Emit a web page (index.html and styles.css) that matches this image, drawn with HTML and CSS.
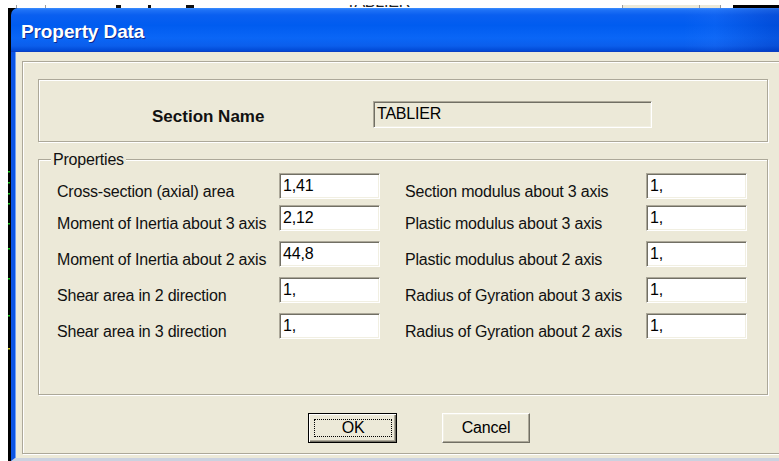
FILE: index.html
```html
<!DOCTYPE html>
<html lang="en">
<head>
<meta charset="utf-8">
<title>Property Data</title>
<link rel="stylesheet" href="styles.css">
</head>
<body>
<div class="desk">
  <!-- strip of the main program window showing above the dialog -->
  <div class="behind">
    <div class="behind-band">
      <span class="bh-rule bh-rule-1"></span>
      <span class="bh-rule bh-rule-2"></span>
      <span class="bh-ink bh-ink-1"></span>
      <span class="bh-ink bh-ink-2"></span>
      <span class="bh-ink bh-ink-3"></span>
      <span class="bh-text">TABLIER</span>
      <span class="bh-panel"></span>
      <span class="bh-panel bh-panel-small"></span>
      <span class="bh-rule bh-rule-end"></span>
      <span class="bh-dark"></span>
    </div>
  </div>

  <div class="stage">
    <div class="gutter">
      <svg class="plot-edge" width="3" height="453" viewBox="0 0 3 453" aria-hidden="true">
        <rect x="0" y="0" width="3" height="453" fill="#000"/>
        <g fill="#17c21a">
          <rect x="0" y="163" width="2" height="1.5"/>
          <rect x="0" y="174" width="2" height="1.5"/>
          <rect x="0" y="185" width="2" height="1.5"/>
          <rect x="0" y="195" width="2" height="1.5"/>
          <rect x="0" y="215" width="2" height="1.5"/>
          <rect x="0" y="240" width="2" height="1.5"/>
          <rect x="0" y="270" width="2" height="1.5"/>
          <rect x="0" y="307" width="2" height="1.5"/>
        </g>
        <rect x="0" y="340" width="2" height="1.5" fill="#c8c21a"/>
      </svg>
    </div>

    <div class="window">
      <div class="titlebar">
        <span class="title">Property Data</span>
      </div>
      <div class="client">
        <div class="frame etched">
          <div class="section-box etched">
            <span class="section-label">Section Name</span>
            <div class="field field-name">TABLIER</div>
          </div>

          <div class="props etched">
            <span class="props-title">Properties</span>

            <div class="prop-row">
              <span class="lbl lbl-left">Cross-section (axial) area</span>
              <div class="field field-num">1,41</div>
              <span class="lbl lbl-right">Section modulus about 3 axis</span>
              <div class="field field-num">1,</div>
            </div>
            <div class="prop-row">
              <span class="lbl lbl-left">Moment of Inertia about 3 axis</span>
              <div class="field field-num">2,12</div>
              <span class="lbl lbl-right">Plastic modulus about 3 axis</span>
              <div class="field field-num">1,</div>
            </div>
            <div class="prop-row">
              <span class="lbl lbl-left">Moment of Inertia about 2 axis</span>
              <div class="field field-num">44,8</div>
              <span class="lbl lbl-right">Plastic modulus about 2 axis</span>
              <div class="field field-num">1,</div>
            </div>
            <div class="prop-row">
              <span class="lbl lbl-left">Shear area in 2 direction</span>
              <div class="field field-num">1,</div>
              <span class="lbl lbl-right">Radius of Gyration about 3 axis</span>
              <div class="field field-num">1,</div>
            </div>
            <div class="prop-row">
              <span class="lbl lbl-left">Shear area in 3 direction</span>
              <div class="field field-num">1,</div>
              <span class="lbl lbl-right">Radius of Gyration about 2 axis</span>
              <div class="field field-num">1,</div>
            </div>
          </div>

          <div class="buttons">
            <button class="btn btn-default" type="button"><span class="btn-focus">OK</span></button>
            <button class="btn btn-cancel" type="button">Cancel</button>
          </div>
        </div>
      </div>
    </div>
  </div>
</div>
</body>
</html>
```

FILE: styles.css
```css
html,
body {
  margin: 0;
  padding: 0;
}

body {
  width: 779px;
  height: 461px;
  overflow: hidden;
  background: #fff;
  font-family: "Liberation Sans", Arial, sans-serif;
  color: #000;
}

.desk {
  display: flex;
  flex-direction: column;
  height: 461px;
}

/* ---- main program strip above the dialog ---- */
.behind {
  flex: none;
  height: 8px;
  background: #fff;
  overflow: hidden;
}

.behind-band {
  display: flex;
  height: 3px;
  margin-top: 5px;
  overflow: hidden;
  background: #fff;
}

.bh-rule {
  flex: none;
  width: 1px;
  height: 3px;
  background: #9c9c9c;
}

.bh-rule-1 { margin-left: 16px; }
.bh-rule-2 { margin-left: 28px; }

.bh-ink {
  flex: none;
  height: 3px;
  background: #111;
}

.bh-ink-1 { width: 5px; margin-left: 70px; }
.bh-ink-2 { width: 3px; margin-left: 27px; }
.bh-ink-3 { width: 8px; margin-left: 35px; }

.bh-text {
  flex: none;
  width: 64px;
  margin-left: 152px;
  margin-top: -12px;
  font-size: 16px;
  line-height: 18px;
  letter-spacing: -0.2px;
  color: #222;
  white-space: nowrap;
}

.bh-panel {
  flex: none;
  width: 76px;
  height: 3px;
  margin-left: 212px;
  background: #ece9d8;
  border-left: 1px solid #9c9c9c;
}

.bh-panel-small {
  width: 20px;
  margin-left: 0;
}

.bh-dark {
  flex: 1;
  height: 3px;
  margin-left: 12px;
  background: #000;
}

/* ---- desktop row: plot edge + dialog ---- */
.stage {
  flex: 1;
  display: flex;
  background: #000;
}

.gutter {
  flex: none;
  width: 3px;
  padding-left: 8px;
  background: #fff;
}

.plot-edge {
  display: block;
}

.window {
  flex: none;
  width: 800px;
  display: flex;
  flex-direction: column;
}

.titlebar {
  flex: none;
  box-sizing: border-box;
  height: 44px;
  padding: 14px 0 0 10px;
  border-top-left-radius: 7px;
  border-bottom: 1px solid #0a3fc4;
  background:
    linear-gradient(to right, rgba(0, 0, 0, 0) 0, rgba(0, 0, 0, 0) 84%, rgba(60, 130, 255, 0.12) 88%, rgba(0, 30, 150, 0.22) 95%, rgba(0, 30, 150, 0.3) 100%),
    linear-gradient(to bottom, #3c8dff 0, #1f72f6 2px, #0a5ff0 7px, #005cf0 40%, #0a66f6 70%, #0b5eec 88%, #0048d4 100%);
}

.title {
  display: block;
  font-size: 19px;
  line-height: 19px;
  font-weight: bold;
  color: #fff;
  text-shadow: 1px 1px 0 #0b2a8e;
  letter-spacing: -0.1px;
}

.client {
  flex: 1;
  background: #ece9d8;
  border-left: 4px solid #0b54e4;
  box-shadow: inset 1px 0 0 #6f9ef4;
  padding: 9px 0 4px 7px;
  border-bottom: 3px solid #cbd2e0;
}

/* XP style etched group border */
.etched {
  border: 1px solid #aca899;
  box-shadow: inset 1px 1px 0 #fff, 1px 1px 0 #fff;
}

.frame {
  width: 780px;
  box-sizing: border-box;
  padding: 17px 0 10px 15px;
}

.section-box {
  display: flex;
  align-items: flex-start;
  box-sizing: border-box;
  width: 730px;
  height: 63px;
  padding: 21px 0 0 113px;
}

.section-label {
  flex: none;
  width: 221px;
  margin-top: 7px;
  font-size: 17px;
  line-height: 18px;
  font-weight: bold;
  color: #111;
}

/* sunken edit box */
.field {
  flex: none;
  box-sizing: border-box;
  border-top: 1px solid #aca899;
  border-left: 1px solid #aca899;
  border-right: 1px solid #fff;
  border-bottom: 1px solid #fff;
  box-shadow: inset 1px 1px 0 #716f64, inset -1px -1px 0 #f1efe2;
  padding: 3px 2px 0 3px;
  font-size: 16px;
  line-height: 18px;
  letter-spacing: -0.2px;
  color: #000;
  white-space: nowrap;
  overflow: hidden;
}

.field-name {
  width: 279px;
  height: 27px;
  background: #ece9d8;
}

.field-num {
  width: 101px;
  height: 26px;
  background: #fff;
}

.props {
  position: relative;
  box-sizing: border-box;
  width: 730px;
  margin-top: 17px;
  padding: 13px 0 55px 18px;
}

.props-title {
  position: absolute;
  top: -8px;
  left: 12px;
  padding: 0 2px;
  background: #ece9d8;
  font-size: 16px;
  line-height: 16px;
  letter-spacing: -0.2px;
  color: #111;
}

.prop-row {
  display: flex;
  align-items: flex-end;
  height: 26px;
}

.prop-row + .prop-row {
  margin-top: 10px;
}

.prop-row:nth-of-type(2) {
  margin-top: 6px;
}

.lbl {
  flex: none;
  margin-bottom: -1px;
  font-size: 16px;
  line-height: 16px;
  letter-spacing: -0.2px;
  color: #111;
  white-space: nowrap;
}

.lbl-left {
  width: 222px;
}

.lbl-right {
  width: 241px;
  margin-left: 25px;
}

.buttons {
  display: flex;
  margin-top: 18px;
  padding-left: 270px;
}

.btn {
  flex: none;
  box-sizing: border-box;
  height: 30px;
  margin: 0;
  padding: 0;
  background: #ece9d8;
  border: 1px solid;
  border-color: #fff #716f64 #716f64 #fff;
  box-shadow: inset -1px -1px 0 #aca899, inset 1px 1px 0 #f1efe2;
  font-family: "Liberation Sans", Arial, sans-serif;
  font-size: 16px;
  line-height: 16px;
  letter-spacing: -0.2px;
  color: #000;
}

.btn-default {
  display: flex;
  width: 89px;
  padding: 5px 4px 5px 5px;
  border-color: #000;
  box-shadow: inset 1px 1px 0 #fff, inset -1px -1px 0 #716f64, inset -2px -2px 0 #aca899;
}

.btn-focus {
  flex: 1;
  display: flex;
  align-items: center;
  justify-content: center;
  border: 1px dotted #000;
}

.btn-cancel {
  width: 88px;
  margin-left: 45px;
}
```
